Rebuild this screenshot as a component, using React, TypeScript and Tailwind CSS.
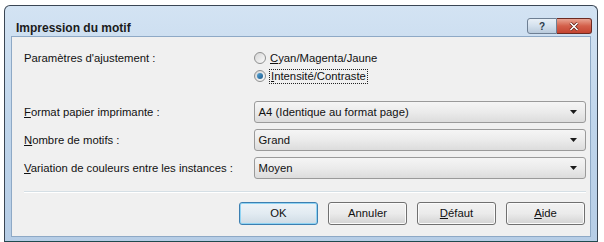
import React from 'react';

const font = "font-['Liberation_Sans',Arial,sans-serif]";

const Radio = ({ checked }: { checked?: boolean }) => (
  <span className="w-[12px] h-[12px] rounded-full border border-[#8e8f8f] bg-gradient-to-br from-[#d6d6d6] to-[#fbfbfb] flex items-center justify-center shrink-0">
    {checked && (
      <span className="w-[6px] h-[6px] rounded-full bg-gradient-to-br from-[#5aa7d8] to-[#1a5a8c]" />
    )}
  </span>
);

const Combo = ({ value }: { value: string }) => (
  <div className="w-[333px] h-[22px] rounded-[3px] border border-[#9a9a9a] bg-gradient-to-b from-[#f5f5f5] via-[#ebebeb] to-[#dcdcdc] flex items-center pl-[4px] pr-[8px]">
    <span className="flex-1 text-[#111]">{value}</span>
    <svg width="7" height="4" viewBox="0 0 7 4">
      <path d="M0 0h7L3.5 4z" fill="#1a1a1a" />
    </svg>
  </div>
);

const Row = ({ label, ul, value }: { label: string; ul: string; value: string }) => (
  <div className="flex items-center h-[22px]">
    <div className="w-[230px] text-[#111]">
      <span className="underline underline-offset-1">{ul}</span>
      {label}
    </div>
    <Combo value={value} />
  </div>
);

const Btn = ({ children, main }: { children: React.ReactNode; main?: boolean }) => (
  <div
    className={
      main
        ? 'w-[79px] h-[23px] rounded-[3px] border border-[#3c7fb1] shadow-[inset_0_0_0_1px_#8fd3f3] bg-gradient-to-b from-[#eef3f7] via-[#e2ebf2] to-[#cfdbe5] flex items-center justify-center text-[#111]'
        : 'w-[79px] h-[23px] rounded-[3px] border border-[#707070] shadow-[inset_0_0_0_1px_#fbfbfb] bg-gradient-to-b from-[#f2f2f2] via-[#ebebeb] to-[#d3d3d3] flex items-center justify-center text-[#111]'
    }
  >
    {children}
  </div>
);

export default function App() {
  return (
    <div className={`w-[604px] h-[242px] bg-white pt-[5px] pl-[4px] pr-[6px] ${font} text-[11.3px]`}>
      <div className="h-[237px] rounded-t-[6px] border border-[#3a4654] border-b-[#1f4a4e] bg-gradient-to-b from-[#d3e3f3] via-[#bfd5eb] to-[#b6cde6] flex flex-col">
        {/* title bar */}
        <div className="h-[30px] flex items-start pl-[11px] pr-[5px]">
          <div className="pt-[13px] font-bold text-[12px] text-[#1b1b1b] flex-1">Impression du motif</div>
          <div className="mt-[12px] flex">
            <div className="w-[30px] h-[16px] rounded-l-[3px] border border-[#6e7f93] bg-gradient-to-b from-[#e9f0f7] via-[#d3e0ed] to-[#b9cadb] flex items-center justify-center text-[10px] font-bold text-[#2b3a4a]">
              ?
            </div>
            <div className="w-[35px] h-[16px] rounded-r-[3px] border border-l-0 border-[#6b2a22] bg-gradient-to-b from-[#e8a493] via-[#d35f4a] to-[#c44431] flex items-center justify-center">
              <svg width="10" height="9" viewBox="0 0 10 9">
                <path d="M1.5 1l7 7M8.5 1l-7 7" stroke="#5a1d14" strokeWidth="3" />
                <path d="M1.5 1l7 7M8.5 1l-7 7" stroke="#fff" strokeWidth="1.6" />
              </svg>
            </div>
          </div>
        </div>
        {/* client */}
        <div className="flex-1 mx-[6px] mb-[4px] border border-[#8ea9c6] bg-[#f0f0f0] pl-[12px] pr-[4px] pt-[12px]">
          <div className="flex items-start">
            <div className="w-[230px] h-[18px] flex items-center text-[#111]">Paramètres d'ajustement :</div>
            <div className="flex flex-col">
              <div className="h-[18px] flex items-center gap-[4px]">
                <Radio />
                <span className="text-[#111]">
                  <span className="underline underline-offset-1">C</span>yan/Magenta/Jaune
                </span>
              </div>
              <div className="h-[18px] flex items-center gap-[3px]">
                <Radio checked />
                <span className="text-[#111] border border-dotted border-[#222] px-[1px] leading-[13px]">
                  <span className="underline underline-offset-1">I</span>ntensité/Contraste
                </span>
              </div>
            </div>
          </div>
          <div className="mt-[16px] flex flex-col gap-[6px]">
            <Row ul="F" label="ormat papier imprimante :" value="A4 (Identique au format page)" />
            <Row ul="N" label="ombre de motifs :" value="Grand" />
            <Row ul="V" label="ariation de couleurs entre les instances :" value="Moyen" />
          </div>
          <div className="mt-[12px] h-[2px] border-t border-[#d5dfe5] border-b border-b-white" />
          <div className="mt-[9px] flex justify-end gap-[10px] pr-[1px]">
            <Btn main>OK</Btn>
            <Btn>Annuler</Btn>
            <Btn>
              <span className="underline underline-offset-1">D</span>éfaut
            </Btn>
            <Btn>
              <span className="underline underline-offset-1">A</span>ide
            </Btn>
          </div>
        </div>
      </div>
    </div>
  );
}
